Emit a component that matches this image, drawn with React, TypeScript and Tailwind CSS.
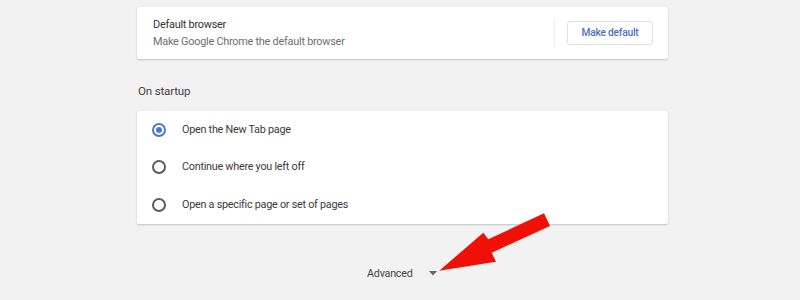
import React from 'react';

const options = [
  { label: 'Open the New Tab page', checked: true },
  { label: 'Continue where you left off', checked: false },
  { label: 'Open a specific page or set of pages', checked: false },
];

function Radio({ checked }: { checked: boolean }) {
  return checked ? (
    <span className="w-[14px] h-[14px] rounded-full border-2 border-[#4c78d0] flex items-center justify-center">
      <span className="w-[6px] h-[6px] rounded-full bg-[#4c78d0]"></span>
    </span>
  ) : (
    <span className="w-[14px] h-[14px] rounded-full border-2 border-[#5c5c5c]"></span>
  );
}

export default function App() {
  return (
    <div
      className="relative w-[800px] h-[300px] bg-[#f2f2f2] overflow-hidden"
      style={{ fontFamily: 'Roboto, "Liberation Sans", sans-serif' }}
    >
      <div className="ml-[137px] w-[531px] pt-[7px] flex flex-col">
        {/* Navigateur par défaut */}
        <div className="h-[52px] bg-white rounded-[2px] shadow-[0_1px_2px_rgba(0,0,0,0.2)] flex items-center pl-[16px] pr-[15px]">
          <div className="flex-1 flex flex-col">
            <span className="text-[10.9px] tracking-[-0.25px] leading-[17px] text-[#333]">Default browser</span>
            <span className="text-[10.9px] tracking-[-0.25px] leading-[17px] text-[#6f6f6f]">Make Google Chrome the default browser</span>
          </div>
          <div className="w-px h-[26px] bg-[#ececec] mr-[12px]"></div>
          <button className="w-[86px] h-[24px] border border-[#e0e0e0] rounded-[3px] text-[10.2px] tracking-[-0.2px] font-medium text-[#4a72c8]">
            Make default
          </button>
        </div>

        <div className="mt-[22px] h-[20px] text-[11.6px] tracking-[-0.2px] leading-[20px] text-[#444] pl-px">On startup</div>

        {/* Choix au démarrage */}
        <div className="mt-[10px] bg-white rounded-[2px] shadow-[0_1px_2px_rgba(0,0,0,0.2)] flex flex-col">
          {options.map((o) => (
            <div key={o.label} className="h-[37.5px] flex items-center pl-[15px]">
              <Radio checked={o.checked} />
              <span className="ml-[16px] text-[10.8px] tracking-[-0.25px] text-[#3a3a3a]">{o.label}</span>
            </div>
          ))}
        </div>

        <div className="mt-[42px] pl-[230px] flex items-center">
          <span className="text-[10.8px] tracking-[-0.25px] text-[#444]">Advanced</span>
          <svg className="ml-[16px]" width="8" height="5" viewBox="0 0 8 5">
            <polygon points="0,0 8,0 4,4.5" fill="#666" />
          </svg>
        </div>
      </div>

      {/* Flèche rouge */}
      <svg className="absolute left-0 top-0" width="800" height="300" viewBox="0 0 800 300">
        <polygon
          points="439.3,270.7 483.3,232.7 488.3,239.3 544,213.3 550,226 491.7,252.7 496,261.7"
          fill="#f20f05"
        />
      </svg>
    </div>
  );
}
